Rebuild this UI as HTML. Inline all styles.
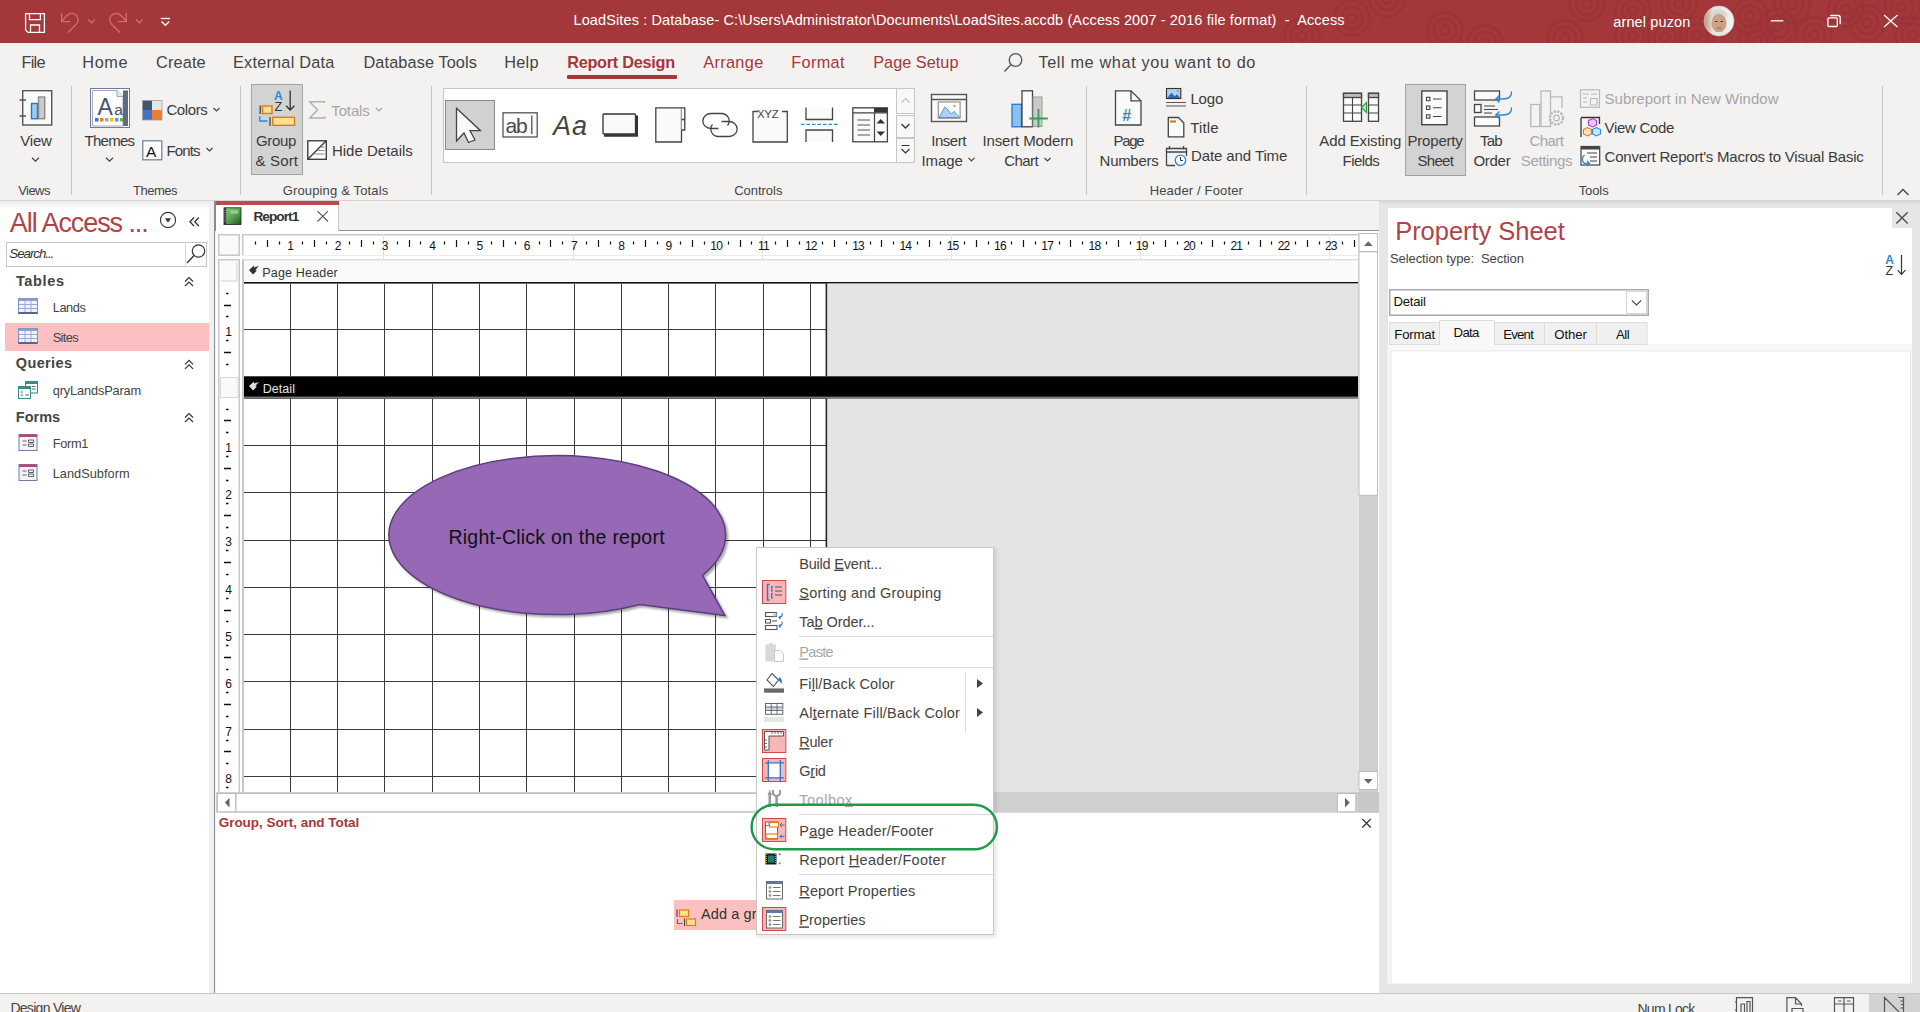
<!DOCTYPE html>
<html><head><meta charset="utf-8"><style>
html,body{margin:0;padding:0}
body{width:1920px;height:1012px;position:relative;overflow:hidden;background:#f3f2f1;font-family:"Liberation Sans",sans-serif}
.t{position:absolute;white-space:nowrap;line-height:1.117;}
.r{position:absolute;box-sizing:border-box}
.s{position:absolute;overflow:visible}
svg text{font-family:"Liberation Sans",sans-serif;white-space:pre}
</style></head><body>
<div class="r" style="left:0.00px;top:0.00px;width:1920.00px;height:43.00px;background:#a4373a"></div>
<div class="r" style="left:0.00px;top:43.00px;width:1920.00px;height:157.00px;background:#f3f2f1"></div>
<div class="r" style="left:0.00px;top:200.00px;width:1920.00px;height:1.00px;background:#d5d5d5"></div>
<div class="r" style="left:0.00px;top:201.00px;width:209.00px;height:792.00px;background:#fff"></div>
<div class="r" style="left:209.00px;top:201.00px;width:5.00px;height:792.00px;background:#eff0f2"></div>
<div class="r" style="left:214.00px;top:201.00px;width:2.00px;height:30.00px;background:#868b94"></div>
<div class="r" style="left:214.00px;top:231.00px;width:1.00px;height:762.00px;background:#8a8f98"></div>
<div class="r" style="left:216.00px;top:201.00px;width:1163.00px;height:792.00px;background:#f3f2f1"></div>
<div class="r" style="left:216.00px;top:231.00px;width:1163.00px;height:762.00px;background:#fff"></div>
<div class="r" style="left:1379.00px;top:201.00px;width:9.00px;height:792.00px;background:#e6e6e6"></div>
<div class="r" style="left:1388.00px;top:201.00px;width:532.00px;height:792.00px;background:#f3f2f1"></div>
<div class="r" style="left:1388.00px;top:208.00px;width:524.00px;height:777.00px;background:#fff"></div>
<div class="r" style="left:0.00px;top:993.00px;width:1920.00px;height:19.00px;background:#f3f2f1;border-top:1px solid #d2d0ce"></div>
<div class="r" style="left:0;top:0;width:1920px;height:43px;overflow:hidden"><svg width="1920" height="43" style="position:absolute;left:0;top:0"><g opacity="0.6"><circle cx="1302.0" cy="36.0" r="4.5" fill="none" stroke="#963139" stroke-width="2.3"/><circle cx="1302.0" cy="36.0" r="11.0" fill="none" stroke="#963139" stroke-width="2.3"/><circle cx="1302.0" cy="36.0" r="17.5" fill="none" stroke="#963139" stroke-width="2.3"/><circle cx="1352.0" cy="18.0" r="4.5" fill="none" stroke="#963139" stroke-width="2.3"/><circle cx="1352.0" cy="18.0" r="11.0" fill="none" stroke="#963139" stroke-width="2.3"/><circle cx="1352.0" cy="18.0" r="17.5" fill="none" stroke="#963139" stroke-width="2.3"/><circle cx="1387.0" cy="-1.0" r="4.5" fill="none" stroke="#963139" stroke-width="2.3"/><circle cx="1387.0" cy="-1.0" r="11.0" fill="none" stroke="#963139" stroke-width="2.3"/><circle cx="1387.0" cy="-1.0" r="17.5" fill="none" stroke="#963139" stroke-width="2.3"/><circle cx="1445.0" cy="30.0" r="4.5" fill="none" stroke="#963139" stroke-width="2.3"/><circle cx="1445.0" cy="30.0" r="11.0" fill="none" stroke="#963139" stroke-width="2.3"/><circle cx="1445.0" cy="30.0" r="17.5" fill="none" stroke="#963139" stroke-width="2.3"/><circle cx="1485.0" cy="43.0" r="4.5" fill="none" stroke="#963139" stroke-width="2.3"/><circle cx="1485.0" cy="43.0" r="11.0" fill="none" stroke="#963139" stroke-width="2.3"/><circle cx="1485.0" cy="43.0" r="17.5" fill="none" stroke="#963139" stroke-width="2.3"/><circle cx="1565.0" cy="38.0" r="4.5" fill="none" stroke="#963139" stroke-width="2.3"/><circle cx="1565.0" cy="38.0" r="11.0" fill="none" stroke="#963139" stroke-width="2.3"/><circle cx="1565.0" cy="38.0" r="17.5" fill="none" stroke="#963139" stroke-width="2.3"/><circle cx="1587.0" cy="3.5" r="4.5" fill="none" stroke="#963139" stroke-width="2.3"/><circle cx="1587.0" cy="3.5" r="11.0" fill="none" stroke="#963139" stroke-width="2.3"/><circle cx="1587.0" cy="3.5" r="17.5" fill="none" stroke="#963139" stroke-width="2.3"/><circle cx="1633.0" cy="10.6" r="4.5" fill="none" stroke="#963139" stroke-width="2.3"/><circle cx="1633.0" cy="10.6" r="11.0" fill="none" stroke="#963139" stroke-width="2.3"/><circle cx="1633.0" cy="10.6" r="17.5" fill="none" stroke="#963139" stroke-width="2.3"/><circle cx="1633.0" cy="36.0" r="4.5" fill="none" stroke="#963139" stroke-width="2.3"/><circle cx="1633.0" cy="36.0" r="11.0" fill="none" stroke="#963139" stroke-width="2.3"/><circle cx="1633.0" cy="36.0" r="17.5" fill="none" stroke="#963139" stroke-width="2.3"/><circle cx="1665.0" cy="37.0" r="4.5" fill="none" stroke="#963139" stroke-width="2.3"/><circle cx="1665.0" cy="37.0" r="11.0" fill="none" stroke="#963139" stroke-width="2.3"/><circle cx="1665.0" cy="37.0" r="17.5" fill="none" stroke="#963139" stroke-width="2.3"/><circle cx="1679.0" cy="3.5" r="4.5" fill="none" stroke="#963139" stroke-width="2.3"/><circle cx="1679.0" cy="3.5" r="11.0" fill="none" stroke="#963139" stroke-width="2.3"/><circle cx="1679.0" cy="3.5" r="17.5" fill="none" stroke="#963139" stroke-width="2.3"/><circle cx="1697.0" cy="35.0" r="4.5" fill="none" stroke="#963139" stroke-width="2.3"/><circle cx="1697.0" cy="35.0" r="11.0" fill="none" stroke="#963139" stroke-width="2.3"/><circle cx="1697.0" cy="35.0" r="17.5" fill="none" stroke="#963139" stroke-width="2.3"/><circle cx="1750.0" cy="16.0" r="4.5" fill="none" stroke="#963139" stroke-width="2.3"/><circle cx="1750.0" cy="16.0" r="11.0" fill="none" stroke="#963139" stroke-width="2.3"/><circle cx="1750.0" cy="16.0" r="17.5" fill="none" stroke="#963139" stroke-width="2.3"/><circle cx="1778.0" cy="26.5" r="4.5" fill="none" stroke="#963139" stroke-width="2.3"/><circle cx="1778.0" cy="26.5" r="11.0" fill="none" stroke="#963139" stroke-width="2.3"/><circle cx="1778.0" cy="26.5" r="17.5" fill="none" stroke="#963139" stroke-width="2.3"/><circle cx="1792.0" cy="5.0" r="4.5" fill="none" stroke="#963139" stroke-width="2.3"/><circle cx="1792.0" cy="5.0" r="11.0" fill="none" stroke="#963139" stroke-width="2.3"/><circle cx="1792.0" cy="5.0" r="17.5" fill="none" stroke="#963139" stroke-width="2.3"/><circle cx="1814.0" cy="35.0" r="4.5" fill="none" stroke="#963139" stroke-width="2.3"/><circle cx="1814.0" cy="35.0" r="11.0" fill="none" stroke="#963139" stroke-width="2.3"/><circle cx="1814.0" cy="35.0" r="17.5" fill="none" stroke="#963139" stroke-width="2.3"/><circle cx="1846.0" cy="9.0" r="4.5" fill="none" stroke="#963139" stroke-width="2.3"/><circle cx="1846.0" cy="9.0" r="11.0" fill="none" stroke="#963139" stroke-width="2.3"/><circle cx="1846.0" cy="9.0" r="17.5" fill="none" stroke="#963139" stroke-width="2.3"/><circle cx="1867.0" cy="23.0" r="4.5" fill="none" stroke="#963139" stroke-width="2.3"/><circle cx="1867.0" cy="23.0" r="11.0" fill="none" stroke="#963139" stroke-width="2.3"/><circle cx="1867.0" cy="23.0" r="17.5" fill="none" stroke="#963139" stroke-width="2.3"/><circle cx="1902.0" cy="7.0" r="4.5" fill="none" stroke="#963139" stroke-width="2.3"/><circle cx="1902.0" cy="7.0" r="11.0" fill="none" stroke="#963139" stroke-width="2.3"/><circle cx="1902.0" cy="7.0" r="17.5" fill="none" stroke="#963139" stroke-width="2.3"/><circle cx="1913.0" cy="35.0" r="4.5" fill="none" stroke="#963139" stroke-width="2.3"/><circle cx="1913.0" cy="35.0" r="11.0" fill="none" stroke="#963139" stroke-width="2.3"/><circle cx="1913.0" cy="35.0" r="17.5" fill="none" stroke="#963139" stroke-width="2.3"/><circle cx="1757.0" cy="41.0" r="4.5" fill="none" stroke="#963139" stroke-width="2.3"/><circle cx="1757.0" cy="41.0" r="11.0" fill="none" stroke="#963139" stroke-width="2.3"/><circle cx="1757.0" cy="41.0" r="17.5" fill="none" stroke="#963139" stroke-width="2.3"/></g></svg></div>
<div class="r" style="left:0.00px;top:0.00px;width:1920.00px;height:0.00px;"></div>
<svg class="s" style="left:0.00px;top:0.00px;" width="1920" height="43" viewBox="0 0 1920 43">
<g fill="none" stroke="#fff" stroke-width="1.3">
<path d="M25.6,13.6 H44.4 V32.4 H28 L25.6,30 Z"/>
<path d="M29.5,13.6 V19.6 H40.4 V13.6"/>
<path d="M30.5,32.4 V25 H39.5 V32.4"/>
</g>
<g fill="none" stroke="#db6a6e" stroke-width="1.3">
<path d="M68,32.5 L76.2,24.3 A6.3,6.3 0 0 0 67.2,15.3 L61.6,21"/>
<path d="M61.6,13 V21.6 H70"/>
<path d="M88.3,19.5 L91.5,22.8 L94.7,19.5"/>
<path d="M119.9,32.5 L111.7,24.3 A6.3,6.3 0 0 1 120.7,15.3 L126.3,21"/>
<path d="M126.3,13 V21.6 H117.9"/>
<path d="M136,19.5 L139.3,22.8 L142.6,19.5"/>
</g>
<g fill="none" stroke="#fff" stroke-width="1.3">
<path d="M160.8,18.5 H170"/>
<path d="M161.5,21.5 L165.4,25.3 L169.3,21.5"/>
<path d="M1770.8,20.8 H1783.3"/>
<rect x="1827.9" y="17.9" width="9.4" height="8.6" rx="1.2"/>
<path d="M1830.2,15.5 H1838 Q1840.2,15.5 1840.2,17.7 V24.2"/>
<path d="M1884,15 L1897.5,27 M1897.5,15 L1884,27"/>
</g>
</svg>
<svg class="s" style="left:571px;top:6px" width="10" height="10"><text x="2.50" y="19.00" style="font-size:14.50px;fill:#fff;letter-spacing:0.112px;white-space:pre;">LoadSites : Database- C:\Users\Administrator\Documents\LoadSites.accdb (Access 2007 - 2016 file format)  -  Access</text></svg>
<svg class="s" style="left:1611px;top:7px" width="10" height="10"><text x="2.30" y="19.50" style="font-size:14.50px;fill:#fff;letter-spacing:0.120px;">arnel puzon</text></svg>
<svg class="s" style="left:1703px;top:5px" width="32" height="32"><defs><clipPath id="avc"><circle cx="16" cy="16" r="15"/></clipPath><linearGradient id="avbg" x1="0" x2="1"><stop offset="0" stop-color="#b58a62"/><stop offset="0.3" stop-color="#e4e0dc"/><stop offset="1" stop-color="#f2f3f4"/></linearGradient></defs><g clip-path="url(#avc)"><rect width="32" height="32" fill="url(#avbg)"/><ellipse cx="16" cy="18" rx="7.5" ry="9.5" fill="#c9a287"/><path d="M7.5,13 Q9,4 16,4.5 Q23,4.5 24.5,12 Q21,8.5 16,9 Q11,8.5 7.5,13 Z" fill="#d8d4d0"/><path d="M12,16.5 H14.5 M17.5,16.5 H20" stroke="#4a3a30" stroke-width="1"/><path d="M13.5,23 H18.5" stroke="#8a5a50" stroke-width="0.9"/><rect x="8" y="27" width="16" height="6" fill="#e8e6e4"/></g><circle cx="16" cy="16" r="15" fill="none" stroke="#d8c8c0" stroke-width="0.6"/></svg>
<svg class="s" style="left:19px;top:47px" width="10" height="10"><text x="2.40" y="21.20" style="font-size:16.30px;fill:#444;letter-spacing:-0.700px;">File</text></svg>
<svg class="s" style="left:80px;top:47px" width="10" height="10"><text x="2.30" y="21.20" style="font-size:16.30px;fill:#444;letter-spacing:0.600px;">Home</text></svg>
<svg class="s" style="left:154px;top:47px" width="10" height="10"><text x="2.00" y="21.20" style="font-size:16.30px;fill:#444;letter-spacing:0.160px;">Create</text></svg>
<svg class="s" style="left:231px;top:47px" width="10" height="10"><text x="2.00" y="21.20" style="font-size:16.30px;fill:#444;letter-spacing:0.217px;">External Data</text></svg>
<svg class="s" style="left:361px;top:47px" width="10" height="10"><text x="2.50" y="21.20" style="font-size:16.30px;fill:#444;letter-spacing:0.108px;">Database Tools</text></svg>
<svg class="s" style="left:502px;top:47px" width="10" height="10"><text x="2.20" y="21.20" style="font-size:16.30px;fill:#444;letter-spacing:0.300px;">Help</text></svg>
<svg class="s" style="left:565px;top:47px" width="10" height="10"><text x="2.20" y="21.20" style="font-size:16.30px;fill:#a4373a;letter-spacing:-0.275px;font-weight:bold;">Report Design</text></svg>
<svg class="s" style="left:701px;top:47px" width="10" height="10"><text x="2.20" y="21.20" style="font-size:16.30px;fill:#a4373a;letter-spacing:0.350px;">Arrange</text></svg>
<svg class="s" style="left:789px;top:47px" width="10" height="10"><text x="2.20" y="21.20" style="font-size:16.30px;fill:#a4373a;letter-spacing:0.360px;">Format</text></svg>
<svg class="s" style="left:871px;top:47px" width="10" height="10"><text x="2.20" y="21.20" style="font-size:16.30px;fill:#a4373a;letter-spacing:0.022px;">Page Setup</text></svg>
<svg class="s" style="left:1036px;top:47px" width="10" height="10"><text x="2.40" y="21.20" style="font-size:16.30px;fill:#444;letter-spacing:0.619px;">Tell me what you want to do</text></svg>
<div class="r" style="left:567.00px;top:75.00px;width:110.00px;height:4.00px;background:#a4373a;border-radius:1px"></div>
<svg class="s" style="left:1000.00px;top:50.00px;" width="26" height="26" viewBox="0 0 26 26"><g fill="none" stroke="#555" stroke-width="1.3"><circle cx="15.5" cy="10" r="6.3"/><path d="M11,14.5 L4.5,21.5"/></g></svg>
<div class="r" style="left:71.00px;top:86.00px;width:1.00px;height:109.00px;background:#c8c6c4"></div>
<div class="r" style="left:240.00px;top:86.00px;width:1.00px;height:109.00px;background:#c8c6c4"></div>
<div class="r" style="left:431.00px;top:86.00px;width:1.00px;height:109.00px;background:#c8c6c4"></div>
<div class="r" style="left:1086.10px;top:86.00px;width:1.00px;height:109.00px;background:#c8c6c4"></div>
<div class="r" style="left:1306.10px;top:86.00px;width:1.00px;height:109.00px;background:#c8c6c4"></div>
<div class="r" style="left:1882.10px;top:86.00px;width:1.00px;height:109.00px;background:#c8c6c4"></div>
<svg class="s" style="left:16px;top:177px" width="10" height="10"><text x="2.20" y="17.50" style="font-size:13.00px;fill:#444;letter-spacing:-0.550px;">Views</text></svg>
<svg class="s" style="left:131px;top:177px" width="10" height="10"><text x="2.00" y="17.50" style="font-size:13.00px;fill:#444;letter-spacing:-0.500px;">Themes</text></svg>
<svg class="s" style="left:280px;top:177px" width="10" height="10"><text x="2.70" y="17.50" style="font-size:13.00px;fill:#444;letter-spacing:0.150px;">Grouping &amp; Totals</text></svg>
<svg class="s" style="left:732px;top:177px" width="10" height="10"><text x="2.20" y="17.50" style="font-size:13.00px;fill:#444;letter-spacing:-0.029px;">Controls</text></svg>
<svg class="s" style="left:1147px;top:177px" width="10" height="10"><text x="2.70" y="17.50" style="font-size:13.00px;fill:#444;letter-spacing:0.157px;">Header / Footer</text></svg>
<svg class="s" style="left:1576px;top:177px" width="10" height="10"><text x="2.70" y="17.50" style="font-size:13.00px;fill:#444;letter-spacing:-0.100px;">Tools</text></svg>
<svg class="s" style="left:18px;top:126px" width="10" height="10"><text x="2.30" y="19.70" style="font-size:15.00px;fill:#3b3b3b;letter-spacing:-0.200px;">View</text></svg>
<svg class="s" style="left:82px;top:126px" width="10" height="10"><text x="2.50" y="19.70" style="font-size:15.00px;fill:#3b3b3b;letter-spacing:-0.740px;">Themes</text></svg>
<svg class="s" style="left:164px;top:95px" width="10" height="10"><text x="2.40" y="20.40" style="font-size:15.00px;fill:#3b3b3b;letter-spacing:-0.400px;">Colors</text></svg>
<svg class="s" style="left:164px;top:136px" width="10" height="10"><text x="2.40" y="19.50" style="font-size:15.00px;fill:#3b3b3b;letter-spacing:-0.850px;">Fonts</text></svg>
<div class="r" style="left:251.30px;top:84.10px;width:51.50px;height:91.30px;background:#d3d3d3;border:1px solid #a3a3a3"></div>
<svg class="s" style="left:254px;top:126px" width="10" height="10"><text x="2.00" y="19.80" style="font-size:15.00px;fill:#3b3b3b;letter-spacing:-0.350px;">Group</text></svg>
<svg class="s" style="left:253px;top:146px" width="10" height="10"><text x="2.60" y="19.60" style="font-size:15.00px;fill:#3b3b3b;letter-spacing:0.140px;">&amp; Sort</text></svg>
<svg class="s" style="left:329px;top:96px" width="10" height="10"><text x="2.30" y="19.60" style="font-size:15.00px;fill:#a6a6a6;letter-spacing:-0.140px;">Totals</text></svg>
<svg class="s" style="left:329px;top:136px" width="10" height="10"><text x="2.90" y="19.50" style="font-size:15.00px;fill:#3b3b3b;letter-spacing:0.009px;">Hide Details</text></svg>
<div class="r" style="left:443.40px;top:88.20px;width:471.60px;height:74.40px;background:#fff;border:1px solid #c8c6c4"></div>
<div class="r" style="left:896.20px;top:88.20px;width:18.80px;height:26.30px;background:#f8f8f8;border:1px solid #c8c6c4"></div>
<div class="r" style="left:896.20px;top:114.50px;width:18.80px;height:23.70px;background:#f8f8f8;border:1px solid #c8c6c4"></div>
<div class="r" style="left:896.20px;top:138.20px;width:18.80px;height:24.40px;background:#f8f8f8;border:1px solid #c8c6c4"></div>
<div class="r" style="left:445.40px;top:100.40px;width:49.40px;height:49.20px;background:#d1d1d1;border:1px solid #8a8a8a"></div>
<svg class="s" style="left:929px;top:126px" width="10" height="10"><text x="2.30" y="19.90" style="font-size:15.00px;fill:#3b3b3b;letter-spacing:-0.500px;">Insert</text></svg>
<svg class="s" style="left:919px;top:146px" width="10" height="10"><text x="2.40" y="19.70" style="font-size:15.00px;fill:#3b3b3b;letter-spacing:-0.075px;">Image</text></svg>
<svg class="s" style="left:980px;top:126px" width="10" height="10"><text x="2.40" y="20.00" style="font-size:15.00px;fill:#3b3b3b;letter-spacing:-0.125px;">Insert Modern</text></svg>
<svg class="s" style="left:1002px;top:146px" width="10" height="10"><text x="2.20" y="20.00" style="font-size:15.00px;fill:#3b3b3b;letter-spacing:-0.575px;">Chart</text></svg>
<svg class="s" style="left:1111px;top:126px" width="10" height="10"><text x="2.50" y="19.50" style="font-size:15.00px;fill:#3b3b3b;letter-spacing:-1.333px;">Page</text></svg>
<svg class="s" style="left:1097px;top:146px" width="10" height="10"><text x="2.60" y="19.50" style="font-size:15.00px;fill:#3b3b3b;letter-spacing:-0.300px;">Numbers</text></svg>
<svg class="s" style="left:1188px;top:84px" width="10" height="10"><text x="2.40" y="19.80" style="font-size:15.00px;fill:#3b3b3b;letter-spacing:-0.133px;">Logo</text></svg>
<svg class="s" style="left:1188px;top:113px" width="10" height="10"><text x="2.20" y="19.50" style="font-size:15.00px;fill:#3b3b3b;letter-spacing:0.150px;">Title</text></svg>
<svg class="s" style="left:1189px;top:141px" width="10" height="10"><text x="2.00" y="20.30" style="font-size:15.00px;fill:#3b3b3b;letter-spacing:-0.100px;">Date and Time</text></svg>
<svg class="s" style="left:1317px;top:126px" width="10" height="10"><text x="2.30" y="19.70" style="font-size:15.00px;fill:#3b3b3b;letter-spacing:-0.127px;">Add Existing</text></svg>
<svg class="s" style="left:1340px;top:146px" width="10" height="10"><text x="2.60" y="19.90" style="font-size:15.00px;fill:#3b3b3b;letter-spacing:-0.580px;">Fields</text></svg>
<div class="r" style="left:1405.20px;top:84.20px;width:60.80px;height:91.40px;background:#d3d3d3;border:1px solid #a3a3a3"></div>
<svg class="s" style="left:1405px;top:126px" width="10" height="10"><text x="2.50" y="19.70" style="font-size:15.00px;fill:#3b3b3b;letter-spacing:-0.200px;">Property</text></svg>
<svg class="s" style="left:1415px;top:146px" width="10" height="10"><text x="2.60" y="19.90" style="font-size:15.00px;fill:#3b3b3b;letter-spacing:-0.750px;">Sheet</text></svg>
<svg class="s" style="left:1478px;top:126px" width="10" height="10"><text x="2.00" y="19.70" style="font-size:15.00px;fill:#3b3b3b;letter-spacing:-0.800px;">Tab</text></svg>
<svg class="s" style="left:1471px;top:146px" width="10" height="10"><text x="2.40" y="19.90" style="font-size:15.00px;fill:#3b3b3b;letter-spacing:-0.275px;">Order</text></svg>
<svg class="s" style="left:1527px;top:126px" width="10" height="10"><text x="2.60" y="19.70" style="font-size:15.00px;fill:#a6a6a6;letter-spacing:-0.600px;">Chart</text></svg>
<svg class="s" style="left:1518px;top:146px" width="10" height="10"><text x="2.80" y="19.90" style="font-size:15.00px;fill:#a6a6a6;letter-spacing:-0.343px;">Settings</text></svg>
<svg class="s" style="left:1602px;top:84px" width="10" height="10"><text x="2.60" y="19.90" style="font-size:15.00px;fill:#a6a6a6;letter-spacing:0.023px;">Subreport in New Window</text></svg>
<svg class="s" style="left:1602px;top:113px" width="10" height="10"><text x="2.60" y="19.70" style="font-size:15.00px;fill:#3b3b3b;letter-spacing:-0.325px;">View Code</text></svg>
<svg class="s" style="left:1602px;top:142px" width="10" height="10"><text x="2.60" y="19.70" style="font-size:15.00px;fill:#3b3b3b;letter-spacing:-0.224px;">Convert Report's Macros to Visual Basic</text></svg>
<svg class="s" style="left:0.00px;top:0.00px;" width="1920" height="201" viewBox="0 0 1920 201"><g stroke-width="1.4" fill="none">
<rect x="22.7" y="90.7" width="29" height="34.3" fill="#fafafa" stroke="#555"/>
<path d="M19.5,100 H26 M19.5,116 H26" stroke="#555"/>
<rect x="31.5" y="103.5" width="6" height="15.2" fill="#9ccbf2" stroke="#1f7bd0"/>
<rect x="38.5" y="97" width="6.2" height="21.7" fill="#cbcbcb" stroke="#8a8a8a"/>
</g><path d="M32.0,157.8 L35.5,161.2 L39.0,157.8" fill="none" stroke="#444" stroke-width="1.2"/><rect x="90.5" y="88.5" width="39" height="39" fill="#fff" stroke="#6c7d99" stroke-width="1"/>
<path d="M92.5,90.5 H117 L123,96.5 V126 H92.5 Z" fill="#fff" stroke="#8a96aa" stroke-width="0.8"/>
<rect x="123" y="90.5" width="5" height="35.5" fill="#5d6b84"/>
<path d="M117,90.5 V96.5 H123" fill="#e8e8e8" stroke="#8a96aa" stroke-width="0.8"/>
<text x="97.6" y="115.3" font-family="Liberation Sans" font-size="23" fill="#44546a">A</text>
<text x="114.3" y="115.3" font-family="Liberation Sans" font-size="15.5" fill="#44546a">a</text>
<g>
<rect x="95" y="118" width="3.5" height="3.5" fill="#4472c4"/><rect x="100" y="118" width="3.5" height="3.5" fill="#ed7d31"/><rect x="105" y="118" width="3.5" height="3.5" fill="#a5a5a5"/><rect x="110" y="118" width="3.5" height="3.5" fill="#ffc000"/><rect x="115" y="118" width="3.5" height="3.5" fill="#5b9bd5"/><rect x="120" y="118" width="3" height="3.5" fill="#70ad47"/>
</g>
<rect x="142.5" y="100.5" width="10" height="10" fill="#44546a"/><rect x="152" y="100.5" width="10" height="10" fill="#e7e6e6"/>
<rect x="142.5" y="110" width="10" height="10" fill="#4472c4"/><rect x="152" y="110" width="10" height="10" fill="#ed7d31"/>
<rect x="142.5" y="100.5" width="19.5" height="19.5" fill="none" stroke="#9aa0a8" stroke-width="0.8"/>
<rect x="142.8" y="140.8" width="19" height="19" fill="#fff" stroke="#6c7d99" stroke-width="1.2"/>
<text x="146" y="157" font-family="Liberation Sans" font-size="15.5" fill="#111">A</text>
<path d="M106.0,157.8 L109.5,161.2 L113.0,157.8" fill="none" stroke="#444" stroke-width="1.2"/><path d="M213.5,108.0 L216.5,111.0 L219.5,108.0" fill="none" stroke="#444" stroke-width="1.2"/><path d="M206.5,148.0 L209.5,151.0 L212.5,148.0" fill="none" stroke="#444" stroke-width="1.2"/><text x="274" y="99.5" font-family="Liberation Sans" font-weight="bold" font-size="12" fill="#2a8ad8">A</text>
<text x="274.5" y="111" font-family="Liberation Sans" font-size="12.5" fill="#333">Z</text>
<path d="M290.2,90.5 V110 M286,105.8 L290.2,110 L294.4,105.8" fill="none" stroke="#333" stroke-width="1.3"/>
<rect x="262.5" y="106" width="9.5" height="7.5" fill="#fbe08e" stroke="#e07b12" stroke-width="1.4"/>
<path d="M260.2,105.5 V114" stroke="#444" stroke-width="1.3"/>
<path d="M259.8,116 V121 H267.5" fill="none" stroke="#2a8ad8" stroke-width="1.3"/>
<path d="M270,117 V126" stroke="#444" stroke-width="1.3"/>
<rect x="272.8" y="117.3" width="21.8" height="8" fill="#fbe08e" stroke="#e07b12" stroke-width="1.4"/>
<path d="M324.5,103 V101.8 H309.8 L317.5,110 L309.8,118 H324.8 V116.5" fill="none" stroke="#b3b3b3" stroke-width="1.5"/><path d="M376.0,108.0 L379.0,111.0 L382.0,108.0" fill="none" stroke="#a6a6a6" stroke-width="1.2"/><rect x="307.8" y="140.8" width="18.5" height="18.5" fill="#fafafa" stroke="#333" stroke-width="1.3"/>
<path d="M308,159 L326,141" stroke="#333" stroke-width="1.3"/>
<path d="M317.5,150.5 H324.5 M314,154 H324.5 M321,147 H324.5" stroke="#888" stroke-width="1.2"/>
<path d="M901.5,102.5 L905.5,98.5 L909.5,102.5" fill="none" stroke="#c0c0c0" stroke-width="1.2"/><path d="M901.5,124 L905.5,128 L909.5,124" fill="none" stroke="#333" stroke-width="1.3"/><path d="M901.5,145.5 H909.5 M901.5,149 L905.5,153 L909.5,149" fill="none" stroke="#333" stroke-width="1.2"/><path d="M456.5,108.3 L480.5,130.7 L470,130.7 L475,140 L468.5,142.5 L464,133 L456.5,141 Z" fill="#fafafa" stroke="#444" stroke-width="1.3" stroke-linejoin="miter"/>
<rect x="503" y="112.8" width="34.2" height="24.2" fill="#fafafa" stroke="#555" stroke-width="1.3"/>
<text x="505.5" y="133.3" font-family="Liberation Sans" font-size="21" fill="#4a4a4a" letter-spacing="-1.2">ab</text>
<path d="M531.8,115.5 V134" stroke="#444" stroke-width="1.2"/>
<text x="553" y="135" font-family="Liberation Sans" font-style="italic" font-size="27" fill="#444" letter-spacing="1">Aa</text>
<rect x="603" y="114" width="32.5" height="20" rx="1" fill="#fafafa" stroke="#333" stroke-width="1.3"/>
<path d="M604,135.5 H636.8 V115.5" fill="none" stroke="#333" stroke-width="2.4"/>
<path d="M655.8,107.8 H681.5 V142 H655.8 Z" fill="#fafafa" stroke="#444" stroke-width="1.3"/>
<path d="M681.5,107.8 H684.8 V130 H681.5 M681.5,119.5 H684.8" fill="#fafafa" stroke="#444" stroke-width="1.3"/>
<g fill="none" stroke="#444" stroke-width="1.3">
<path d="M718.5,128.5 H711 A8.2,7.5 0 0 1 711,113.5 H722 A8.2,7.5 0 0 1 727.5,125.5"/>
<path d="M721.5,121.5 H729 A8.2,7.5 0 0 1 729,136.5 H718 A8.2,7.5 0 0 1 712.5,124.5"/>
</g>
<path d="M758,111.5 H753 V142 H787.3 V111.5 H782" fill="#fafafa" stroke="#444" stroke-width="1.3"/>
<text x="757" y="118" font-family="Liberation Sans" font-size="11.5" fill="#444" letter-spacing="-0.3">XYZ</text>
<path d="M806,107.5 V119.5 H832.5 V107.5 M806,142 V130 H832.5 V142" fill="#fafafa" stroke="#444" stroke-width="1.3"/>
<path d="M801,124.3 H838" stroke="#2a8ad8" stroke-width="1.3" stroke-dasharray="3.5,2"/>
<rect x="852.8" y="107.8" width="34.6" height="34" fill="#fafafa" stroke="#444" stroke-width="1.3"/>
<rect x="874" y="108" width="13.2" height="4.5" fill="#333"/>
<path d="M853,112.8 H887.2 M874.5,112.8 V142" stroke="#444" stroke-width="1.2"/>
<path d="M857.5,120 H870 M857.5,125 H870 M857.5,130 H870 M857.5,135 H870" stroke="#555" stroke-width="1"/>
<path d="M876.5,123.5 L880.8,119 L885,123.5 Z M876.5,131.5 L880.8,136 L885,131.5 Z" fill="#333"/>
<rect x="931.5" y="94.5" width="35" height="27" fill="#fafafa" stroke="#555" stroke-width="1.4"/>
<path d="M931.5,99.5 H966.5" stroke="#555" stroke-width="1.4"/>
<rect x="938.3" y="102" width="21.8" height="16.2" fill="#fff" stroke="#888" stroke-width="1.1"/>
<path d="M939,117.5 L945,106.8 L951.5,114 L954,111.3 L959.5,117.5 Z" fill="#a9d2f3" stroke="#4a90cf" stroke-width="0.9"/>
<circle cx="954.5" cy="106" r="1.3" fill="#f0a050"/>
<path d="M968.5,157.8 L971.5,160.8 L974.5,157.8" fill="none" stroke="#444" stroke-width="1.2"/><rect x="1012" y="104.3" width="9.5" height="22.5" fill="#8bc0ee" stroke="#1f7bd0" stroke-width="1.3"/>
<rect x="1022" y="90.8" width="10.5" height="36" fill="#fafafa" stroke="#444" stroke-width="1.3"/>
<rect x="1033" y="97" width="9" height="29.5" fill="#cacaca" stroke="#999" stroke-width="1"/>
<path d="M1038.5,109 V127.5 M1029.3,118.5 H1047.8" stroke="#2ea24a" stroke-width="1.8"/>
<path d="M1044.5,158.0 L1047.5,161.0 L1050.5,158.0" fill="none" stroke="#444" stroke-width="1.2"/><path d="M1115.5,90.8 H1131 L1141,100.8 V125 H1115.5 Z" fill="#fafafa" stroke="#444" stroke-width="1.3"/>
<path d="M1131,90.8 V100.8 H1141" fill="none" stroke="#444" stroke-width="1.3"/>
<text x="1122.3" y="121.3" font-family="Liberation Sans" font-weight="bold" font-size="16" fill="#2a8ad8">#</text>
<rect x="1166.5" y="88.5" width="14.3" height="10" fill="#a9d2f3" stroke="#333" stroke-width="1.1"/>
<path d="M1167.3,98 L1171.3,92.8 L1174.8,96.3 L1177,94.3 L1180.2,98 Z" fill="#1f70c0"/><circle cx="1178" cy="91" r="0.9" fill="#e07b12"/>
<path d="M1166,102.5 H1186 M1166,106 H1186" stroke="#555" stroke-width="1.2"/>
<path d="M1168.3,117.5 H1178.5 L1183.8,123 V136.8 H1168.3 Z" fill="#fafafa" stroke="#444" stroke-width="1.3"/>
<path d="M1170,121.5 H1176" stroke="#e07b12" stroke-width="2.2"/>
<path d="M1166.5,165.5 V148.5 H1186.5 V156 M1166.5,152 H1186.5 M1169.5,146 V149.5 M1183.5,146 V149.5 M1166.5,165.5 H1175" fill="none" stroke="#444" stroke-width="1.3"/>
<circle cx="1180.5" cy="160.3" r="5.2" fill="#fff" stroke="#2a8ad8" stroke-width="1.4"/>
<path d="M1180.5,157 V160.5 H1183" fill="none" stroke="#333" stroke-width="1"/>
<g fill="#fafafa" stroke="#444" stroke-width="1.3">
<rect x="1343.5" y="93.3" width="18" height="28"/>
<rect x="1368.5" y="93.3" width="10" height="28"/>
</g>
<rect x="1343.5" y="93.3" width="18" height="4.2" fill="#bdbdbd" stroke="#444" stroke-width="1.3"/>
<rect x="1368.5" y="93.3" width="10" height="4.2" fill="#bdbdbd" stroke="#444" stroke-width="1.3"/>
<path d="M1343.5,105 H1361.5 M1343.5,113 H1361.5 M1352.5,97.5 V121.3 M1368.5,105 H1378.5 M1368.5,113 H1378.5" stroke="#444" stroke-width="1.1"/>
<path d="M1366.5,102.5 V112.5 L1361.5,107.5 Z" fill="#b9e3b0" stroke="#2ea24a" stroke-width="1.2"/>
<rect x="1421.8" y="91" width="25.2" height="33.7" fill="#fafafa" stroke="#444" stroke-width="1.4"/>
<g fill="none" stroke="#444" stroke-width="1.1">
<rect x="1426.5" y="97.3" width="3.4" height="3.4"/><rect x="1426.5" y="106" width="3.4" height="3.4"/><rect x="1426.5" y="114.8" width="3.4" height="3.4"/>
<path d="M1433,99 H1441.5 M1433,107.7 H1441.5 M1433,116.5 H1441.5"/>
</g>
<g fill="#fafafa" stroke="#444" stroke-width="1.3">
<rect x="1474.5" y="91" width="25" height="9"/>
<rect x="1474.5" y="104.5" width="6.5" height="8"/>
<rect x="1474.5" y="117" width="25" height="9"/>
</g>
<path d="M1484,106 H1495 M1484,109.5 H1498 M1484,113 H1492" stroke="#444" stroke-width="1.2"/>
<g fill="none" stroke="#2a8ad8" stroke-width="1.4">
<path d="M1511.5,91.5 Q1512,99 1503,99 H1496 M1499.5,95.5 L1495.8,99 L1499.5,102.5"/>
<path d="M1511.5,107.5 Q1512,115 1503,115 H1496 M1499.5,111.5 L1495.8,115 L1499.5,118.5"/>
</g>
<g fill="#f3f3f3" stroke="#b8b8b8" stroke-width="1.3">
<rect x="1530.8" y="104.5" width="9" height="22"/>
<rect x="1541" y="91" width="9.5" height="35.5"/>
<path d="M1550.5,96.8 H1562 V108"/>
</g>
<circle cx="1556.5" cy="118" r="6.5" fill="#f3f3f3" stroke="#b8b8b8" stroke-width="2.4" stroke-dasharray="2.2,1.2"/>
<circle cx="1556.5" cy="118" r="2.8" fill="none" stroke="#b8b8b8" stroke-width="1.2"/>
<rect x="1580.5" y="89.8" width="19" height="17.5" fill="#f3f3f3" stroke="#b8b8b8" stroke-width="1.2"/>
<path d="M1583,94 H1589 M1583,98 H1587 M1583,102 H1587 M1590.5,98.5 H1597 V105 H1590.5 Z M1591,94 H1597" fill="none" stroke="#b8b8b8" stroke-width="1.1"/>
<path d="M1581,118 V137 M1581,117.5 H1599.5 V124" fill="none" stroke="#333" stroke-width="1.3"/>
<path d="M1588.5,120.5 L1592.5,118.5 L1596.5,120.5 V125 L1592.5,127 L1588.5,125 Z" fill="#e6c8f0" stroke="#a040c0" stroke-width="1.1"/>
<path d="M1583.5,129.5 L1587.5,127.5 L1591.5,129.5 V134 L1587.5,136 L1583.5,134 Z" fill="#fde0c0" stroke="#e07b12" stroke-width="1.1"/>
<path d="M1592.5,129.5 L1596.5,127.5 L1600.5,129.5 V134 L1596.5,136 L1592.5,134 Z" fill="#c6e6fa" stroke="#2a8ad8" stroke-width="1.1"/>
<rect x="1581" y="146.5" width="18.7" height="18.5" fill="#fafafa" stroke="#444" stroke-width="1.2"/>
<rect x="1581" y="146.5" width="18.7" height="3" fill="#444"/>
<path d="M1587,153 H1597 M1590,157 H1597 M1590,161 H1597" stroke="#444" stroke-width="1"/>
<path d="M1584.5,155 Q1580,159 1584.5,163.5 H1589 M1587,161 L1589.5,163.5 L1587,166" fill="none" stroke="#2a8ad8" stroke-width="1.3"/>
<path d="M1897.5,195 L1903,189.5 L1908.5,195" fill="none" stroke="#444" stroke-width="1.3"/></svg>
<div class="r" style="left:0.00px;top:201.00px;width:209.00px;height:8.00px;background:linear-gradient(#ebebeb,#fff)"></div>
<svg class="s" style="left:7px;top:197px" width="10" height="10"><text x="2.80" y="35.30" style="font-size:27.00px;fill:#ad4548;letter-spacing:-1.085px;">All Access ...</text></svg>
<svg class="s" style="left:13px;top:267px" width="10" height="10"><text x="2.90" y="18.90" style="font-size:14.50px;fill:#444;letter-spacing:0.640px;font-weight:bold;">Tables</text></svg>
<svg class="s" style="left:13px;top:349px" width="10" height="10"><text x="2.80" y="19.30" style="font-size:14.50px;fill:#444;letter-spacing:0.367px;font-weight:bold;">Queries</text></svg>
<svg class="s" style="left:13px;top:402px" width="10" height="10"><text x="2.80" y="19.70" style="font-size:14.50px;fill:#444;font-weight:bold;">Forms</text></svg>
<div class="r" style="left:5.00px;top:323.00px;width:204.00px;height:28.00px;background:#fcc0c1"></div>
<svg class="s" style="left:0;top:0" width="215" height="500"><circle cx="168" cy="220" r="7.6" fill="none" stroke="#333" stroke-width="1.1"/>
<path d="M165,218.2 H171 L168,222.8 Z" fill="#333"/>
<g fill="none" stroke="#333" stroke-width="1.3"><path d="M194,217.5 L190,221.8 L194,226 M198.8,217.5 L194.8,221.8 L198.8,226"/></g>
<rect x="6.5" y="242.5" width="200" height="24" fill="#fff" stroke="#c6c6c6" stroke-width="1"/>
<path d="M185.5,243 V266" stroke="#d8d8d8" stroke-width="1"/>
<circle cx="198.5" cy="251" r="6.2" fill="none" stroke="#333" stroke-width="1.2"/>
<path d="M194,255.5 L187,263" stroke="#333" stroke-width="1.3"/>
<path d="M185,281.5 L189,277.5 L193,281.5 M185,286 L189,282 L193,286" fill="none" stroke="#333" stroke-width="1.2" transform="translate(0,0.0)"/><path d="M185,281.5 L189,277.5 L193,281.5 M185,286 L189,282 L193,286" fill="none" stroke="#333" stroke-width="1.2" transform="translate(0,82.8)"/><path d="M185,281.5 L189,277.5 L193,281.5 M185,286 L189,282 L193,286" fill="none" stroke="#333" stroke-width="1.2" transform="translate(0,136.0)"/><g transform="translate(18.0,298.0)">
<rect x="0.5" y="0.5" width="19" height="15" fill="#eef3fb" stroke="#7d8fb8" stroke-width="1"/>
<rect x="0.5" y="0.5" width="19" height="2.5" fill="#8ea0c8"/>
<path d="M1,6.5 H19 M1,10.5 H19 M7,3 V15 M13,3 V15" stroke="#9aaad0" stroke-width="1"/>
<rect x="0.5" y="14" width="19" height="2" fill="#56678f"/>
</g><g transform="translate(18.0,328.0)">
<rect x="0.5" y="0.5" width="19" height="15" fill="#eef3fb" stroke="#7d8fb8" stroke-width="1"/>
<rect x="0.5" y="0.5" width="19" height="2.5" fill="#8ea0c8"/>
<path d="M1,6.5 H19 M1,10.5 H19 M7,3 V15 M13,3 V15" stroke="#9aaad0" stroke-width="1"/>
<rect x="0.5" y="14" width="19" height="2" fill="#56678f"/>
</g><g transform="translate(18,381)">
<rect x="7.5" y="0.5" width="12" height="11.5" fill="#f4f8f8" stroke="#3d8a8a" stroke-width="1"/>
<rect x="7.5" y="0.5" width="12" height="2.5" fill="#3d8a8a"/>
<path d="M14,5.5 H17.5 M14,8 H17.5" stroke="#555" stroke-width="0.9"/>
<rect x="0.5" y="5.5" width="12" height="12" fill="#f4f8f8" stroke="#3d8a8a" stroke-width="1"/>
<rect x="0.5" y="5.5" width="12" height="2.5" fill="#3d8a8a"/>
<path d="M3,11 H5 M3,14 H5 M7.5,14 H11" stroke="#555" stroke-width="0.9"/>
</g><g transform="translate(18.5,434.0)">
<rect x="0.5" y="0.5" width="18" height="16" fill="#f2f4fa" stroke="#6d7fa8" stroke-width="1"/>
<rect x="0.5" y="0.5" width="18" height="2.5" fill="#c0407a"/>
<path d="M4,7 H8 M4,11 H8 M10,6 H15 V8.5 H10 Z M10,10 H15 V12.5 H10 Z" fill="none" stroke="#555" stroke-width="0.9"/>
</g><g transform="translate(18.5,464.0)">
<rect x="0.5" y="0.5" width="18" height="16" fill="#f2f4fa" stroke="#6d7fa8" stroke-width="1"/>
<rect x="0.5" y="0.5" width="18" height="2.5" fill="#c0407a"/>
<path d="M4,7 H8 M4,11 H8 M10,6 H15 V8.5 H10 Z M10,10 H15 V12.5 H10 Z" fill="none" stroke="#555" stroke-width="0.9"/>
</g></svg>
<svg class="s" style="left:7px;top:240px" width="10" height="10"><text x="2.30" y="17.80" style="font-size:13.30px;fill:#333;letter-spacing:-1.025px;font-style:italic;">Search...</text></svg>
<svg class="s" style="left:50px;top:295px" width="10" height="10"><text x="2.70" y="17.00" style="font-size:12.80px;fill:#444;letter-spacing:-0.425px;">Lands</text></svg>
<svg class="s" style="left:50px;top:324px" width="10" height="10"><text x="2.70" y="17.60" style="font-size:12.80px;fill:#444;letter-spacing:-0.600px;">Sites</text></svg>
<svg class="s" style="left:50px;top:377px" width="10" height="10"><text x="2.70" y="17.60" style="font-size:12.80px;fill:#444;letter-spacing:-0.150px;">qryLandsParam</text></svg>
<svg class="s" style="left:50px;top:430px" width="10" height="10"><text x="2.70" y="17.60" style="font-size:12.80px;fill:#444;letter-spacing:-0.300px;">Form1</text></svg>
<svg class="s" style="left:50px;top:461px" width="10" height="10"><text x="2.70" y="16.80" style="font-size:12.80px;fill:#444;letter-spacing:0.010px;">LandSubform</text></svg>
<div class="r" style="left:216.00px;top:230.00px;width:1163.00px;height:1.00px;background:#8c9097"></div>
<div class="r" style="left:215.80px;top:201.00px;width:123.00px;height:30.00px;background:#fff;border-right:1px solid #c8c8c8"></div>
<div class="r" style="left:215.80px;top:201.00px;width:123.00px;height:4.00px;background:#b94a4d"></div>
<svg class="s" style="left:0;top:0" width="400" height="240"><g transform="translate(224,207.8)">
<defs><linearGradient id="gnb" x1="0" y1="0" x2="1" y2="1"><stop offset="0" stop-color="#8fd08a"/><stop offset="0.6" stop-color="#4f9a4f"/><stop offset="1" stop-color="#1f4f22"/></linearGradient></defs>
<rect x="0" y="0" width="17" height="16.8" fill="url(#gnb)" stroke="#1a2a1a" stroke-width="0.8"/>
<rect x="0" y="0" width="2.2" height="16.8" fill="#333"/>
<path d="M1.1,2 V15" stroke="#ccc" stroke-width="0.8" stroke-dasharray="1,1.2"/>
<rect x="6.5" y="2.5" width="7.5" height="3.5" fill="#a9dca4" opacity="0.7"/>
</g>
<path d="M317.5,211.2 L328,221.5 M328,211.2 L317.5,221.5" stroke="#555" stroke-width="1.1"/>
</svg>
<svg class="s" style="left:251px;top:203px" width="10" height="10"><text x="2.40" y="17.90" style="font-size:13.70px;fill:#333;letter-spacing:-0.967px;font-weight:bold;">Report1</text></svg>
<svg class="s" style="left:0;top:0" width="1400" height="1000" shape-rendering="auto"><rect x="218.75" y="234.75" width="20.5" height="20.5" fill="#fafafa" stroke="#c8c8c8" stroke-width="1.5"/><rect x="242" y="234" width="1116" height="22" fill="#fff"/><path d="M242,234.75 H1358" stroke="#c8c8c8" stroke-width="1.5"/><path d="M242.75,234 V256" stroke="#c8c8c8" stroke-width="1.5"/><path d="M242,255.5 H1358" stroke="#ececec" stroke-width="1"/><path d="M255.5,241.5 V244.5 M267.5,240.0 V247.0 M279.5,241.5 V244.5 M302.5,241.5 V244.5 M314.5,240.0 V247.0 M326.5,241.5 V244.5 M349.5,241.5 V244.5 M361.5,240.0 V247.0 M373.5,241.5 V244.5 M397.5,241.5 V244.5 M409.5,240.0 V247.0 M420.5,241.5 V244.5 M444.5,241.5 V244.5 M456.5,240.0 V247.0 M468.5,241.5 V244.5 M491.5,241.5 V244.5 M503.5,240.0 V247.0 M515.5,241.5 V244.5 M539.5,241.5 V244.5 M550.5,240.0 V247.0 M562.5,241.5 V244.5 M586.5,241.5 V244.5 M598.5,240.0 V247.0 M610.5,241.5 V244.5 M633.5,241.5 V244.5 M645.5,240.0 V247.0 M657.5,241.5 V244.5 M680.5,241.5 V244.5 M692.5,240.0 V247.0 M704.5,241.5 V244.5 M728.5,241.5 V244.5 M740.5,240.0 V247.0 M751.5,241.5 V244.5 M775.5,241.5 V244.5 M787.5,240.0 V247.0 M799.5,241.5 V244.5 M822.5,241.5 V244.5 M834.5,240.0 V247.0 M846.5,241.5 V244.5 M870.5,241.5 V244.5 M881.5,240.0 V247.0 M893.5,241.5 V244.5 M917.5,241.5 V244.5 M929.5,240.0 V247.0 M940.5,241.5 V244.5 M964.5,241.5 V244.5 M976.5,240.0 V247.0 M988.5,241.5 V244.5 M1011.5,241.5 V244.5 M1023.5,240.0 V247.0 M1035.5,241.5 V244.5 M1059.5,241.5 V244.5 M1070.5,240.0 V247.0 M1082.5,241.5 V244.5 M1106.5,241.5 V244.5 M1118.5,240.0 V247.0 M1130.5,241.5 V244.5 M1153.5,241.5 V244.5 M1165.5,240.0 V247.0 M1177.5,241.5 V244.5 M1201.5,241.5 V244.5 M1212.5,240.0 V247.0 M1224.5,241.5 V244.5 M1248.5,241.5 V244.5 M1260.5,240.0 V247.0 M1271.5,241.5 V244.5 M1295.5,241.5 V244.5 M1307.5,240.0 V247.0 M1319.5,241.5 V244.5 M1342.5,241.5 V244.5 M1354.5,240.0 V247.0 " stroke="#111" stroke-width="1.2"/><path d="M383.5,234 V259 M573.5,234 V259 M762.5,234 V259 M951.5,234 V259 M1140.5,234 V259 M1329.5,234 V259 " stroke="#e2e2e2" stroke-width="1"/><g font-family="Liberation Sans" font-size="12" fill="#111" transform="translate(0,0)"><text x="290.7" y="250" text-anchor="middle" >1</text><text x="338.0" y="250" text-anchor="middle" >2</text><text x="385.2" y="250" text-anchor="middle" >3</text><text x="432.5" y="250" text-anchor="middle" >4</text><text x="479.8" y="250" text-anchor="middle" >5</text><text x="527.1" y="250" text-anchor="middle" >6</text><text x="574.4" y="250" text-anchor="middle" >7</text><text x="621.6" y="250" text-anchor="middle" >8</text><text x="668.9" y="250" text-anchor="middle" >9</text><text x="716.2" y="250" text-anchor="middle" letter-spacing="-0.8">10</text><text x="763.5" y="250" text-anchor="middle" letter-spacing="-0.8">11</text><text x="810.8" y="250" text-anchor="middle" letter-spacing="-0.8">12</text><text x="858.0" y="250" text-anchor="middle" letter-spacing="-0.8">13</text><text x="905.3" y="250" text-anchor="middle" letter-spacing="-0.8">14</text><text x="952.6" y="250" text-anchor="middle" letter-spacing="-0.8">15</text><text x="999.9" y="250" text-anchor="middle" letter-spacing="-0.8">16</text><text x="1047.2" y="250" text-anchor="middle" letter-spacing="-0.8">17</text><text x="1094.4" y="250" text-anchor="middle" letter-spacing="-0.8">18</text><text x="1141.7" y="250" text-anchor="middle" letter-spacing="-0.8">19</text><text x="1189.0" y="250" text-anchor="middle" letter-spacing="-0.8">20</text><text x="1236.3" y="250" text-anchor="middle" letter-spacing="-0.8">21</text><text x="1283.6" y="250" text-anchor="middle" letter-spacing="-0.8">22</text><text x="1330.8" y="250" text-anchor="middle" letter-spacing="-0.8">23</text></g><rect x="218.75" y="259.75" width="20.5" height="533" fill="#fff" stroke="#c8c8c8" stroke-width="1.5"/><rect x="220.5" y="261.5" width="17" height="20" fill="#fafafa" stroke="none"/><path d="M221,281 H237 V262" fill="none" stroke="#d0d0d0" stroke-width="1"/><path d="M243,259.3 V792" stroke="#c8c8c8" stroke-width="2"/><rect x="244" y="259.3" width="1114" height="23" fill="#fafafa"/><path d="M244,259.8 H1358" stroke="#d0d0d0" stroke-width="1"/><rect x="244" y="282" width="1114" height="1.6" fill="#111"/><rect x="827.5" y="283.6" width="530.5" height="92.7" fill="#e4e4e4"/><rect x="244" y="376.3" width="1114" height="20.5" fill="#000"/><rect x="244" y="397.4" width="1114" height="1.3" fill="#222"/><rect x="827.5" y="398.7" width="530.5" height="393.3" fill="#e4e4e4"/><path d="M290.5,283.6 V376.3 M290.5,398.7 V792 M337.5,283.6 V376.3 M337.5,398.7 V792 M384.5,283.6 V376.3 M384.5,398.7 V792 M432.5,283.6 V376.3 M432.5,398.7 V792 M479.5,283.6 V376.3 M479.5,398.7 V792 M526.5,283.6 V376.3 M526.5,398.7 V792 M574.5,283.6 V376.3 M574.5,398.7 V792 M621.5,283.6 V376.3 M621.5,398.7 V792 M668.5,283.6 V376.3 M668.5,398.7 V792 M715.5,283.6 V376.3 M715.5,398.7 V792 M763.5,283.6 V376.3 M763.5,398.7 V792 M810.5,283.6 V376.3 M810.5,398.7 V792 M244,329.5 H826.4 M244,445.5 H826.4 M244,492.5 H826.4 M244,540.5 H826.4 M244,587.5 H826.4 M244,634.5 H826.4 M244,681.5 H826.4 M244,729.5 H826.4 M244,776.5 H826.4 " stroke="#3a3a3a" stroke-width="1"/><path d="M826.4,283.6 V376.3 M826.4,398.7 V792" stroke="#222" stroke-width="1.6"/><path d="M226.0,293.5 H228.5 M224.0,305.5 H231.0 M226.0,316.5 H228.5 M226.0,340.5 H228.5 M224.0,352.5 H231.0 M226.0,364.5 H228.5 M226.0,409.5 H228.5 M224.0,420.5 H231.0 M226.0,432.5 H228.5 M226.0,456.5 H228.5 M224.0,468.5 H231.0 M226.0,480.5 H228.5 M226.0,503.5 H228.5 M224.0,515.5 H231.0 M226.0,527.5 H228.5 M226.0,550.5 H228.5 M224.0,562.5 H231.0 M226.0,574.5 H228.5 M226.0,598.5 H228.5 M224.0,610.5 H231.0 M226.0,621.5 H228.5 M226.0,645.5 H228.5 M224.0,657.5 H231.0 M226.0,669.5 H228.5 M226.0,692.5 H228.5 M224.0,704.5 H231.0 M226.0,716.5 H228.5 M226.0,740.5 H228.5 M224.0,751.5 H231.0 M226.0,763.5 H228.5 M226.0,787.5 H228.5 " stroke="#111" stroke-width="1.4"/><g font-family="Liberation Sans" font-size="12" fill="#111"><text x="228.7" y="336.0" text-anchor="middle">1</text><text x="228.7" y="451.9" text-anchor="middle">1</text><text x="228.7" y="499.2" text-anchor="middle">2</text><text x="228.7" y="546.4" text-anchor="middle">3</text><text x="228.7" y="593.7" text-anchor="middle">4</text><text x="228.7" y="641.0" text-anchor="middle">5</text><text x="228.7" y="688.3" text-anchor="middle">6</text><text x="228.7" y="735.6" text-anchor="middle">7</text><text x="228.7" y="782.8" text-anchor="middle">8</text></g><rect x="220.5" y="377.5" width="17.5" height="20" fill="#fafafa" stroke="#d8d8d8" stroke-width="1"/><rect x="1358.5" y="233" width="19.5" height="559" fill="#cfcfcf"/><rect x="1359" y="233.5" width="18.5" height="18" fill="#fff" stroke="#bdbdbd" stroke-width="1"/><path d="M1364,246 L1368.3,241.3 L1372.6,246 Z" fill="#666"/><rect x="1359" y="251.8" width="18.5" height="243.5" fill="#fff" stroke="#bdbdbd" stroke-width="1"/><rect x="1359" y="771.5" width="18.5" height="18" fill="#fff" stroke="#bdbdbd" stroke-width="1"/><path d="M1364,779 L1368.3,783.8 L1372.6,779 Z" fill="#666"/><rect x="216" y="792" width="1163" height="20.7" fill="#cfcfcf"/><rect x="217.5" y="793.5" width="18.3" height="18.3" fill="#fff" stroke="#bdbdbd" stroke-width="1"/><path d="M229.5,797.8 L224.8,802.6 L229.5,807.4 Z" fill="#666"/><rect x="236" y="793.5" width="720" height="18.3" fill="#fff" stroke="#bdbdbd" stroke-width="1"/><rect x="1337.5" y="793.5" width="18.3" height="18.3" fill="#fff" stroke="#bdbdbd" stroke-width="1"/><path d="M1345,797.8 L1349.7,802.6 L1345,807.4 Z" fill="#666"/><rect x="1358" y="792" width="21" height="20.7" fill="#c8c8cb"/><g transform="translate(249,265)"><path d="M0,5 L5,0.5 L5,2.5 Q8.5,1 10,1 Q7.5,3 6.5,5.5 L8,5.5 L4,9.5 Z" fill="#333"/></g><g transform="translate(249,381)"><path d="M0,5 L5,0.5 L5,2.5 Q8.5,1 10,1 Q7.5,3 6.5,5.5 L8,5.5 L4,9.5 Z" fill="#ddd"/></g><path d="M1362.3,819 L1370.8,827.5 M1370.8,819 L1362.3,827.5" stroke="#333" stroke-width="1.2"/></svg>
<svg class="s" style="left:260px;top:260px" width="10" height="10"><text x="2.30" y="16.50" style="font-size:12.50px;fill:#333;letter-spacing:0.180px;">Page Header</text></svg>
<svg class="s" style="left:260px;top:376px" width="10" height="10"><text x="2.70" y="16.60" style="font-size:12.50px;fill:#e6e6e6;letter-spacing:0.060px;">Detail</text></svg>
<svg class="s" style="left:216px;top:809px" width="10" height="10"><text x="2.75" y="18.40" style="font-size:13.50px;fill:#a4373a;letter-spacing:-0.043px;font-weight:bold;">Group, Sort, and Total</text></svg>
<div class="r" style="left:674.00px;top:900.30px;width:86.00px;height:29.40px;background:#fcc0c1"></div>
<svg class="s" style="left:0;top:0" width="1000" height="1012"><rect x="679.5" y="910" width="9" height="6.5" fill="#fbe08e" stroke="#e07b12" stroke-width="1.2"/>
<rect x="686.5" y="919" width="9" height="6.5" fill="#fbe08e" stroke="#e07b12" stroke-width="1.2"/>
<path d="M677,909.5 V917 M684.5,918.5 V926" stroke="#444" stroke-width="1.1"/>
<path d="M677.5,919 V923.5 H682.5" fill="none" stroke="#2e75c6" stroke-width="1.1"/>
</svg>
<svg class="s" style="left:699px;top:900px" width="10" height="10"><text x="2.00" y="19.40" style="font-size:14.50px;fill:#333;letter-spacing:0.100px;">Add a group</text></svg>
<svg class="s" style="left:0;top:0" width="1000" height="700"><defs><filter id="bsh" x="-10%" y="-10%" width="120%" height="130%"><feGaussianBlur in="SourceAlpha" stdDeviation="1.2"/><feOffset dx="2" dy="2"/><feComponentTransfer><feFuncA type="linear" slope="0.35"/></feComponentTransfer><feMerge><feMergeNode/><feMergeNode in="SourceGraphic"/></feMerge></filter></defs>
<path filter="url(#bsh)" d="M702.5,575.3 L725,615.6 L639.7,604.4 A168.4,79.5 0 1 1 702.5,575.3 Z" fill="#9668b6" stroke="#5a3f7c" stroke-width="1.5" stroke-linejoin="miter"/>
</svg>
<svg class="s" style="left:446px;top:518px" width="10" height="10"><text x="2.40" y="25.80" style="font-size:19.50px;fill:#111;letter-spacing:0.246px;">Right-Click on the report</text></svg>
<div class="r" style="left:757.00px;top:548.00px;width:240.00px;height:390.00px;background:rgba(0,0,0,0.08);filter:blur(1.5px)"></div>
<div class="r" style="left:756.00px;top:547.00px;width:238.00px;height:387.50px;background:#fff;border:1px solid #c6c6c6"></div>
<svg class="s" style="left:797px;top:549px" width="10" height="10"><text x="2.30" y="19.60" style="font-size:14.50px;fill:#444;letter-spacing:-0.215px;">Build <tspan text-decoration="underline">E</tspan>vent...</text></svg>
<svg class="s" style="left:797px;top:578px" width="10" height="10"><text x="2.30" y="19.60" style="font-size:14.50px;fill:#444;letter-spacing:0.216px;"><tspan text-decoration="underline">S</tspan>orting and Grouping</text></svg>
<svg class="s" style="left:797px;top:608px" width="10" height="10"><text x="2.30" y="19.00" style="font-size:14.50px;fill:#444;letter-spacing:-0.055px;">Ta<tspan text-decoration="underline">b</tspan> Order...</text></svg>
<svg class="s" style="left:797px;top:638px" width="10" height="10"><text x="2.30" y="19.40" style="font-size:14.50px;fill:#a6a6a6;letter-spacing:-0.675px;"><tspan text-decoration="underline">P</tspan>aste</text></svg>
<svg class="s" style="left:797px;top:669px" width="10" height="10"><text x="2.30" y="19.80" style="font-size:14.50px;fill:#444;letter-spacing:0.136px;">Fi<tspan text-decoration="underline">l</tspan>l/Back Color</text></svg>
<svg class="s" style="left:797px;top:698px" width="10" height="10"><text x="2.30" y="19.50" style="font-size:14.50px;fill:#444;letter-spacing:0.212px;">Al<tspan text-decoration="underline">t</tspan>ernate Fill/Back Color</text></svg>
<svg class="s" style="left:797px;top:728px" width="10" height="10"><text x="2.30" y="19.10" style="font-size:14.50px;fill:#444;letter-spacing:-0.250px;"><tspan text-decoration="underline">R</tspan>uler</text></svg>
<svg class="s" style="left:797px;top:756px" width="10" height="10"><text x="2.30" y="19.60" style="font-size:14.50px;fill:#444;letter-spacing:-0.267px;">G<tspan text-decoration="underline">r</tspan>id</text></svg>
<svg class="s" style="left:797px;top:785px" width="10" height="10"><text x="2.30" y="19.70" style="font-size:14.50px;fill:#a6a6a6;letter-spacing:0.500px;">Toolbo<tspan text-decoration="underline">x</tspan></text></svg>
<svg class="s" style="left:797px;top:816px" width="10" height="10"><text x="2.30" y="19.70" style="font-size:14.50px;fill:#444;letter-spacing:0.176px;">P<tspan text-decoration="underline">a</tspan>ge Header/Footer</text></svg>
<svg class="s" style="left:797px;top:846px" width="10" height="10"><text x="2.30" y="18.90" style="font-size:14.50px;fill:#444;letter-spacing:0.284px;">Report <tspan text-decoration="underline">H</tspan>eader/Footer</text></svg>
<svg class="s" style="left:797px;top:877px" width="10" height="10"><text x="2.30" y="19.00" style="font-size:14.50px;fill:#444;letter-spacing:0.138px;"><tspan text-decoration="underline">R</tspan>eport Properties</text></svg>
<svg class="s" style="left:797px;top:906px" width="10" height="10"><text x="2.30" y="19.40" style="font-size:14.50px;fill:#444;letter-spacing:0.022px;"><tspan text-decoration="underline">P</tspan>roperties</text></svg>
<svg class="s" style="left:0;top:0" width="1100" height="1000"><g stroke="#dadada" stroke-width="1">
<path d="M799,636.5 H993 M799,667.5 H993 M799,814.5 H993 M799,874.5 H993"/>
<path d="M965.5,672 V703 M965.5,704 V733"/>
</g>
<path d="M977,679 L983,683.5 L977,688 Z M977,708 L983,712.5 L977,717 Z" fill="#444"/>
<g fill="#f8b6b6" stroke="#d04848" stroke-width="1">
<rect x="762.5" y="580.5" width="23.3" height="23"/>
<rect x="762.5" y="729.5" width="23.3" height="23"/>
<rect x="762.5" y="758.5" width="23.3" height="23"/>
<rect x="762.5" y="818.5" width="23.3" height="23"/>
<rect x="762.5" y="907.5" width="23.3" height="23"/>
</g>
<path d="M769.5,584.5 H767.5 V600 H769.5" fill="none" stroke="#2e75c6" stroke-width="1.4"/>
<path d="M773,586.5 H771.7 V591 H773 M773,593.5 H771.7 V598 H773" fill="none" stroke="#2e75c6" stroke-width="1.2"/>
<path d="M775,587 H782 M775,591 H782 M775,595 H782" stroke="#555" stroke-width="1.1"/>
<g fill="none" stroke="#555" stroke-width="1.1">
<rect x="765.5" y="612.5" width="11" height="4"/><rect x="765.5" y="619.5" width="5" height="3.5"/><rect x="765.5" y="625.5" width="11.5" height="4"/>
<path d="M772,621 H777"/>
</g>
<rect x="773.5" y="612.8" width="3" height="3.5" fill="#a9d0f0"/>
<path d="M782,613 Q783,617 779,617.5 M780.5,616 L779,617.5 L780.5,619 M782,621.5 Q783,625.5 779,626 M780.5,624.5 L779,626 L780.5,627.5" fill="none" stroke="#2e75c6" stroke-width="1.1"/>
<path d="M765.5,644.5 H769 V643 H772.5 V644.5 H776 V653 H775 V661.5 H765.5 Z" fill="#d9d7d9"/>
<path d="M774.5,650.5 H780 L783.5,654 V661.5 H774.5 Z" fill="#fff" stroke="#c6c6c6" stroke-width="1"/>
<path d="M772,673.5 L778.5,680 L773.5,686.5 L767,680 Z" fill="#fff" stroke="#555" stroke-width="1.1"/>
<path d="M779,677 Q783,679 781.5,684 Q779.5,681 778.5,680 Z" fill="#2e75c6"/>
<rect x="764" y="688.4" width="20" height="4.3" fill="#6a6a6a"/>
<rect x="765.5" y="703.5" width="17.3" height="10.8" fill="#fff" stroke="#666" stroke-width="1"/>
<rect x="766" y="707" width="16.3" height="3" fill="#c4daf0"/>
<path d="M766,707 H782.8 M766,710.5 H782.8 M771.3,704 V714 M777,704 V714" stroke="#666" stroke-width="0.9"/>
<rect x="764" y="717" width="20" height="5" fill="#e6e6e6"/>
<g fill="#fff" stroke="#555" stroke-width="1">
<path d="M764.5,731.5 H783.5 V736 H769 V750 H764.5 Z"/>
</g>
<path d="M772,731.5 V734 M775,731.5 V734 M778,731.5 V734 M781,731.5 V734 M764.5,740 H767 M764.5,743.5 H767 M764.5,747 H767" stroke="#555" stroke-width="0.9"/>
<rect x="768" y="762.5" width="12.5" height="15" fill="#fff"/>
<path d="M765,762.8 H784 M765,777.8 H784 M768.3,760 V781 M780.3,760 V781" stroke="#2e75c6" stroke-width="1.3"/>
<g fill="#9a9a9a">
<rect x="768.5" y="794" width="2.5" height="13"/>
<path d="M767.5,795 L769.8,789.5 L772,795 Z"/>
<rect x="775.3" y="795" width="2.6" height="12"/>
</g>
<path d="M773,790 V794 Q776.5,798 780,794 V790" fill="none" stroke="#9a9a9a" stroke-width="2"/>
<rect x="765.5" y="822" width="12" height="17" fill="#fff" stroke="#666" stroke-width="1"/>
<path d="M769,822.5 V825.5 H766" fill="none" stroke="#666" stroke-width="0.8"/>
<rect x="769.5" y="822.5" width="9" height="4.5" fill="#fff" stroke="#e07b12" stroke-width="1.1"/>
<rect x="766" y="834" width="11.5" height="4.5" fill="#fff" stroke="#e07b12" stroke-width="1.1"/>
<path d="M784.5,825 H780 M782,823 L780,825 L782,827 M784.5,836.5 H780 M782,834.5 L780,836.5 L782,838.5" fill="none" stroke="#2e75c6" stroke-width="1"/>
<rect x="765.5" y="853.5" width="11" height="11" fill="#1a1a1a"/>
<rect x="768" y="855.5" width="6.5" height="7" fill="#1f7a7a"/>
<path d="M766.5,854 V864 M775.5,854 V864" stroke="#e8c040" stroke-width="0.8" stroke-dasharray="1,1"/>
<path d="M779,853.5 L780.5,855 M779,864 L780.5,862.5" stroke="#2e75c6" stroke-width="1.2"/>
<rect x="766.5" y="881.5" width="16" height="17.5" fill="#fff" stroke="#666" stroke-width="1"/>
<rect x="766.5" y="881.5" width="16" height="2.5" fill="#5b7bb0"/>
<g fill="none" stroke="#666" stroke-width="0.9"><circle cx="770" cy="887.5" r="0.9"/><circle cx="770" cy="891.5" r="0.9"/><circle cx="770" cy="895.5" r="0.9"/><path d="M773,887.5 H780.5 M773,891.5 H780.5 M773,895.5 H780.5"/></g>
<rect x="766.5" y="910.5" width="16" height="17.5" fill="#fff" stroke="#666" stroke-width="1"/>
<rect x="766.5" y="910.5" width="16" height="2.5" fill="#5b7bb0"/>
<g fill="none" stroke="#666" stroke-width="0.9"><circle cx="770" cy="916.5" r="0.9"/><circle cx="770" cy="920.5" r="0.9"/><circle cx="770" cy="924.5" r="0.9"/><path d="M773,916.5 H780.5 M773,920.5 H780.5 M773,924.5 H780.5"/></g>
<rect x="751.6" y="804.7" width="245.3" height="44.6" rx="23" ry="22.3" fill="none" stroke="#1e9a4a" stroke-width="2.4"/>
</svg>
<div class="r" style="left:1379.00px;top:201.00px;width:541.00px;height:792.50px;background:#e6e6e6"></div>
<div class="r" style="left:1379.00px;top:201.00px;width:541.00px;height:4.00px;background:linear-gradient(#d8d8d8,#e6e6e6)"></div>
<div class="r" style="left:1387.50px;top:207.60px;width:524.50px;height:776.40px;background:#fff"></div>
<div class="r" style="left:1892.00px;top:207.60px;width:20.00px;height:20.10px;background:#e6e6e6"></div>
<svg class="s" style="left:0;top:0" width="1920" height="1012"><path d="M1896.3,212.3 L1907.7,223.5 M1907.7,212.3 L1896.3,223.5" stroke="#555" stroke-width="1.6"/>
<text x="1885.3" y="263.6" font-family="Liberation Sans" font-weight="bold" font-size="12" fill="#2a8ad8">A</text>
<text x="1885.6" y="274.8" font-family="Liberation Sans" font-size="12.5" fill="#333">Z</text>
<path d="M1901.5,255 V274.3 M1897.6,270.2 L1901.5,274.3 L1905.4,270.2" fill="none" stroke="#333" stroke-width="1.2"/>
<rect x="1389.75" y="289.75" width="258.5" height="25.5" fill="#fff" stroke="#a9a9b1" stroke-width="1.5"/>
<rect x="1626.5" y="291.7" width="20" height="21.8" fill="#fff" stroke="#d4d4d4" stroke-width="1"/>
<path d="M1631.8,300.3 L1636.5,305 L1641.2,300.3" fill="none" stroke="#444" stroke-width="1.1"/>
<rect x="1387.5" y="344" width="524.5" height="640" fill="#f8f8f8"/>
<rect x="1391" y="351" width="519.5" height="633" fill="#fff" stroke="#e8e8e8" stroke-width="1"/>
<g stroke="#dcdcdc" stroke-width="1">
<rect x="1389.5" y="322.5" width="50" height="22" fill="#f0f0f0"/>
<rect x="1494.5" y="322.5" width="50" height="22" fill="#f0f0f0"/>
<rect x="1544.5" y="322.5" width="52" height="22" fill="#f0f0f0"/>
<rect x="1596.5" y="322.5" width="50.5" height="22" fill="#f0f0f0"/>
<path d="M1439.5,344.5 V320.5 H1494.5 V344.5" fill="#f8f8f8"/>
</g>
</svg>
<svg class="s" style="left:1393px;top:206px" width="10" height="10"><text x="2.20" y="34.10" style="font-size:25.50px;fill:#ad4548;letter-spacing:-0.038px;">Property Sheet</text></svg>
<svg class="s" style="left:1388px;top:246px" width="10" height="10"><text x="2.00" y="17.00" style="font-size:13.00px;fill:#444;letter-spacing:-0.087px;white-space:pre;">Selection type:  Section</text></svg>
<svg class="s" style="left:1391px;top:289px" width="10" height="10"><text x="2.40" y="17.30" style="font-size:13.20px;fill:#111;letter-spacing:-0.240px;">Detail</text></svg>
<svg class="s" style="left:1392px;top:321px" width="10" height="10"><text x="2.30" y="18.10" style="font-size:13.20px;fill:#111;letter-spacing:-0.200px;">Format</text></svg>
<svg class="s" style="left:1451px;top:319px" width="10" height="10"><text x="2.60" y="17.90" style="font-size:13.20px;fill:#111;letter-spacing:-0.667px;">Data</text></svg>
<svg class="s" style="left:1501px;top:321px" width="10" height="10"><text x="2.20" y="18.10" style="font-size:13.20px;fill:#111;letter-spacing:-0.775px;">Event</text></svg>
<svg class="s" style="left:1552px;top:321px" width="10" height="10"><text x="2.30" y="18.10" style="font-size:13.20px;fill:#111;letter-spacing:-0.125px;">Other</text></svg>
<svg class="s" style="left:1614px;top:321px" width="10" height="10"><text x="2.00" y="18.10" style="font-size:13.20px;fill:#111;letter-spacing:-0.500px;">All</text></svg>
<div class="r" style="left:0.00px;top:993.00px;width:1920.00px;height:19.00px;background:#f3f2f1;border-top:1px solid #c8c8c8"></div>
<div class="r" style="left:1869.00px;top:994.00px;width:51.00px;height:18.00px;background:#d2d2d2"></div>
<svg class="s" style="left:8px;top:994px" width="10" height="10"><text x="2.40" y="19.00" style="font-size:14.00px;fill:#444;letter-spacing:-0.710px;">Design View</text></svg>
<svg class="s" style="left:1635px;top:995px" width="10" height="10"><text x="2.50" y="18.50" style="font-size:14.00px;fill:#444;letter-spacing:-0.757px;">Num Lock</text></svg>
<svg class="s" style="left:0;top:0" width="1920" height="1012"><g fill="none" stroke="#555" stroke-width="1.2">
<path d="M1736.5,1012 V997.7 H1752.5 V1012 M1734.8,1002 H1737 M1734.8,1010 H1737 M1741,1012 V1004 H1744.5 V1012 M1747,1012 V1001.5 H1750 V1012"/>
<path d="M1786.9,1012 V997.7 H1795.5 L1801.5,1004 V1006 M1795.5,997.7 V1004 H1801.5 M1792,1012 V1008.5 H1803 V1012"/>
<path d="M1834.5,1012 V997.7 H1853.5 V1012 M1844,997.7 V1012 M1834.5,1004 H1853.5 M1838,1001 H1841.5 M1847,1001 H1850.5"/>
<path d="M1884.5,1012 V997.5 L1899,1012 M1898.5,997.5 H1903.5 V1012 M1900.5,1001 H1903.5 M1901,1004.5 H1903.5 M1900.5,1008 H1903.5"/>
</g>
</svg>
</body></html>
